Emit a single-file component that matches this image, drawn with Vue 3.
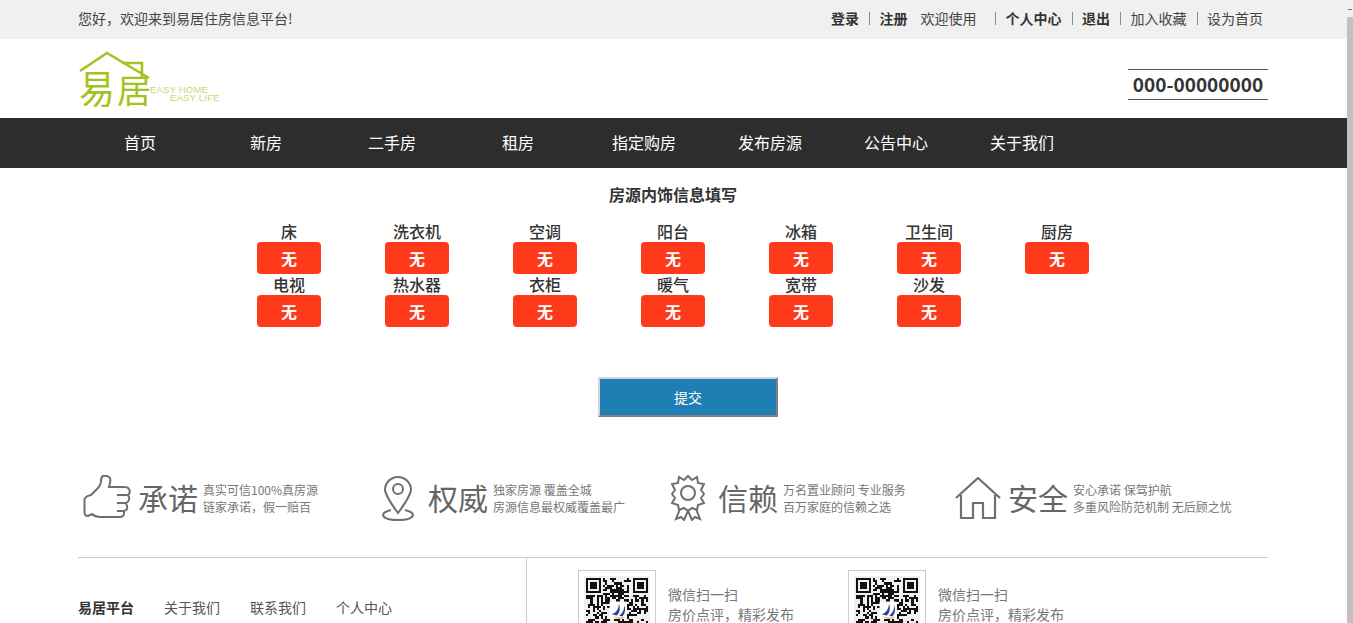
<script setup>
const topLeft = "您好，欢迎来到易居住房信息平台!";
const navItems = ["首页", "新房", "二手房", "租房", "指定购房", "发布房源", "公告中心", "关于我们"];
const amenities = ["床", "洗衣机", "空调", "阳台", "冰箱", "卫生间", "厨房", "电视", "热水器", "衣柜", "暖气", "宽带", "沙发"];
const promises = [
    { key: "thumb", title: "承诺", lines: ["真实可信100%真房源", "链家承诺，假一赔百"] },
    { key: "pin", title: "权威", lines: ["独家房源 覆盖全城", "房源信息最权威覆盖最广"] },
    { key: "medal", title: "信赖", lines: ["万名置业顾问 专业服务", "百万家庭的信赖之选"] },
    { key: "house", title: "安全", lines: ["安心承诺 保驾护航", "多重风险防范机制 无后顾之忧"] }
];
const footerLinks = ["关于我们", "联系我们", "个人中心"];

// fake qr modules, same seed every time so both codes look identical
const qrSize = 29;
const qrCells = [];
function inFinder(x, y) {
    return (x < 8 && y < 8) || (x >= qrSize - 8 && y < 8) || (x < 8 && y >= qrSize - 8);
}
let seed = 7;
for (let y = 0; y < qrSize; y++) {
    for (let x = 0; x < qrSize; x++) {
        seed = (seed * 1103515245 + 12345) % 2147483648;
        const inLogo = x > 10 && x < 19 && y > 10 && y < 19;
        if (!inFinder(x, y) && !inLogo && (seed >> 16) % 100 < 52) {
            qrCells.push({ x, y });
        }
    }
}
const finders = [[0, 0], [qrSize - 7, 0], [0, qrSize - 7]];
</script>

<template>
    <div class="screen">
        <div class="page">
            <div class="topbar">
                <div class="wrap topbar-inner">
                    <span>{{ topLeft }}</span>
                    <div class="top-links">
                        <b>登录</b><i class="sep"></i><b>注册</b>
                        <span class="welcome">欢迎使用</span>
                        <i class="sep wide"></i><b>个人中心</b><i class="sep"></i><b>退出</b><i class="sep"></i>
                        <span>加入收藏</span><i class="sep"></i><span>设为首页</span>
                    </div>
                </div>
            </div>

            <header class="wrap header">
                <svg class="logo" width="142" height="72" viewBox="0 -6 142 72">
                    <text class="logo-cn" transform="translate(1 53) scale(1 1.08)">易</text>
                    <text class="logo-cn" transform="translate(39 53) scale(0.95 0.92)">居</text>
                    <path d="M2 21 L29 3 L71 28 M44 13 L64 13 L64 27" fill="none" stroke="#a3c31f" stroke-width="2.6" />
                    <text class="logo-en"><tspan x="72" y="43">EASY HOME</tspan><tspan x="92" y="51">EASY LIFE</tspan></text>
                </svg>
                <div class="phone">000-00000000</div>
            </header>

            <nav class="nav">
                <div class="wrap nav-inner">
                    <a v-for="item in navItems" :key="item">{{ item }}</a>
                </div>
            </nav>

            <main class="form">
                <h2>房源内饰信息填写</h2>
                <div class="amenities">
                    <div class="amenity" v-for="name in amenities" :key="name">
                        <div class="amenity-name">{{ name }}</div>
                        <button class="toggle">无</button>
                    </div>
                </div>
                <button class="submit">提交</button>
            </main>

            <section class="wrap promises">
                <div class="promise" v-for="p in promises" :key="p.key">
                    <div class="promise-icon">
                        <svg v-if="p.key == 'thumb'" width="50" height="45" viewBox="0 0 50 45" fill="none" stroke="#6f6f6f" stroke-width="2">
                            <path d="M1.5 24 L1.5 37 Q1.5 41 5 41 L9 39 Q12 42 17 42 L37 42 Q41 42 41 38 L41 36 Q45 35 44 31 L43 28 Q47 26 46 22 L45 20 Q48 17 46 14 Q45 12 41 12 L26 12 Q28 6 27 3 Q25 0 20 1 Q18 2 18 6 Q18 10 14 14 L8 20 Q3 21 1.5 24 Z" />
                            <path d="M34 20 L45 20 M34 28 L43 28 M34 36 L41 36" />
                        </svg>
                        <svg v-else-if="p.key == 'pin'" width="32" height="46" viewBox="0 0 32 46" fill="none" stroke="#6f6f6f" stroke-width="2">
                            <path d="M16 38 Q4 22 3 15 A13 13 0 1 1 29 15 Q28 22 16 38 Z" />
                            <circle cx="16" cy="14" r="5" />
                            <path d="M9 35 Q1 37 1 40 Q2 45 16 45 Q30 45 31 40 Q31 37 23 35" />
                        </svg>
                        <svg v-else-if="p.key == 'medal'" width="34" height="46" viewBox="0 0 34 46" fill="none" stroke="#6f6f6f" stroke-width="2">
                            <path d="M17 1 L21 5 L26 2 L27 8 L33 9 L30 15 L33 19 L30 23 L33 28 L27 30 L26 35 L21 33 L17 36 L13 33 L8 35 L7 30 L1 28 L4 23 L1 19 L4 15 L1 9 L7 8 L8 2 L13 5 Z" />
                            <circle cx="17" cy="18" r="7" />
                            <path d="M9 34 L5 44 L10 42 L13 45 L17 36 L21 45 L24 42 L29 44 L25 34" />
                        </svg>
                        <svg v-else width="46" height="42" viewBox="0 0 46 42" fill="none" stroke="#6f6f6f" stroke-width="2.2">
                            <path d="M1 21 L23 1 L45 21" />
                            <path d="M6 18 L6 41 L18 41 L18 26 L28 26 L28 41 L40 41 L40 18" />
                        </svg>
                    </div>
                    <div class="promise-title">{{ p.title }}</div>
                    <div class="promise-desc">
                        <p v-for="line in p.lines" :key="line">{{ line }}</p>
                    </div>
                </div>
            </section>

            <footer class="wrap footer">
                <div class="footer-links">
                    <b>易居平台</b>
                    <a v-for="link in footerLinks" :key="link">{{ link }}</a>
                </div>
                <div class="footer-codes">
                    <div class="code" v-for="n in 2" :key="n">
                        <div class="qr">
                            <svg width="66" height="66" :viewBox="`-1 -1 ${qrSize + 2} ${qrSize + 2}`" shape-rendering="crispEdges">
                                <rect x="-1" y="-1" :width="qrSize + 2" :height="qrSize + 2" fill="#f0f0f0" />
                                <rect v-for="(c, i) in qrCells" :key="i" :x="c.x" :y="c.y" width="1" height="1" fill="#111" />
                                <g v-for="(f, i) in finders" :key="'f' + i">
                                    <rect :x="f[0]" :y="f[1]" width="7" height="7" fill="#111" />
                                    <rect :x="f[0] + 1" :y="f[1] + 1" width="5" height="5" fill="#f0f0f0" />
                                    <rect :x="f[0] + 2" :y="f[1] + 2" width="3" height="3" fill="#111" />
                                </g>
                                <g shape-rendering="auto">
                                    <rect x="11" y="11" width="8" height="8" fill="#fff" />
                                    <path d="M12 17 Q15 16 15.5 12 Q16.5 15.5 14.5 17.5 Z M15.5 17.5 Q18 16 18 12.5 Q19 16 17 18 Z" fill="#2b3f9e" />
                                    <path d="M12 17.5 Q15 19.5 18.5 18 Q15.5 20.5 12 17.5 Z" fill="#e08a2a" />
                                </g>
                            </svg>
                        </div>
                        <div class="code-text">
                            <p>微信扫一扫</p>
                            <p>房价点评，精彩发布</p>
                        </div>
                    </div>
                </div>
            </footer>
        </div>

        <div class="scrollbar"><div class="scroll-arrow"></div><div class="scroll-thumb"></div></div>
    </div>
</template>

<style>
    html, body {
        margin: 0;
        overflow: hidden;
        background: #fff;
    }
</style>

<style scoped>
    .screen {
        position: relative;
        width: 1353px;
        height: 623px;
        overflow: hidden;
        font-family: "Noto Sans CJK SC", "Liberation Sans", sans-serif;
        font-size: 14px;
        color: #444;
    }

    .page {
        width: 1347px;
    }

    .wrap {
        width: 1190px;
        margin-left: 78px;
        box-sizing: border-box;
    }

    .topbar {
        height: 39px;
        background: #f0f0f0;
        line-height: 36px;
    }

    .topbar-inner {
        display: flex;
        justify-content: space-between;
        padding-right: 5px;
    }

    .top-links {
        display: flex;
        align-items: center;
    }

    .top-links b {
        color: #333;
    }

    .welcome {
        margin-left: 13px;
    }

    .sep {
        width: 1px;
        height: 13px;
        background: #8a8a8a;
        margin: 1px 9.5px 0 10px;
    }

    .sep.wide {
        margin: 1px 10px 0 18px;
    }

    .header {
        height: 79px;
        display: flex;
        justify-content: space-between;
        align-items: flex-start;
    }

    .logo {
        margin-top: 5px;
    }

    .logo-cn {
        font-family: "Noto Sans CJK SC", sans-serif;
        font-size: 36px;
        fill: #a3c31f;
    }

    .logo-en {
        font-family: "Liberation Sans", sans-serif;
        font-size: 9.5px;
        letter-spacing: 0.2px;
        fill: #c6d971;
    }

    .phone {
        width: 140px;
        margin-top: 30px;
        height: 29px;
        border-top: 1px solid #555;
        border-bottom: 1px solid #555;
        font-size: 19px;
        font-weight: 700;
        line-height: 27px;
        text-align: center;
        color: #333;
    }

    .nav {
        height: 50px;
        background: #2d2d2d;
    }

    .nav-inner {
        display: flex;
        margin-left: 77px;
    }

    .nav-inner a {
        width: 126px;
        text-align: center;
        line-height: 48px;
        font-size: 16px;
        color: #fff;
    }

    .form {
        width: 1346px;
        display: flex;
        flex-direction: column;
        align-items: center;
        height: 302px;
    }

    h2 {
        margin: 15px 0 0;
        font-size: 16px;
        line-height: 23px;
        font-weight: 700;
        color: #333;
    }

    .amenities {
        width: 896px;
        margin-top: 15px;
        display: grid;
        grid-template-columns: repeat(7, 128px);
    }

    .amenity {
        height: 53px;
        display: flex;
        flex-direction: column;
        align-items: center;
    }

    .amenity-name {
        height: 21px;
        line-height: 21px;
        font-size: 16px;
        font-weight: 500;
        color: #333;
    }

    .toggle {
        width: 64px;
        height: 32px;
        padding: 0;
        border: none;
        border-radius: 4px;
        background: #ff3a1a;
        color: #fff;
        font-family: inherit;
        font-size: 16px;
        font-weight: 700;
    }

    .submit {
        width: 180px;
        height: 40px;
        margin-top: 50px;
        margin-left: 30px;
        padding: 0;
        border: 2px solid;
        border-color: #d4d4d4 #808080 #808080 #d4d4d4;
        background: #1f7fb5;
        color: #fff;
        font-family: inherit;
        font-size: 14px;
    }

    .promises {
        height: 88px;
        display: grid;
        grid-template-columns: repeat(4, 290px);
        border-bottom: 1px solid #ccc;
    }

    .promise {
        display: flex;
        height: 55px;
    }

    .promise-icon {
        width: 60px;
        height: 55px;
        display: flex;
        justify-content: center;
        align-items: center;
        flex-shrink: 0;
    }

    .promise-title {
        width: 60px;
        margin-right: 5px;
        font-size: 30px;
        line-height: 54px;
        color: #666;
        flex-shrink: 0;
    }

    .promise-desc {
        padding-top: 11px;
        font-size: 12px;
        line-height: 17px;
        color: #777;
        white-space: nowrap;
    }

    p {
        margin: 0;
    }

    .footer {
        display: flex;
        height: 200px;
    }

    .footer-links {
        width: 448px;
        height: 200px;
        box-sizing: content-box;
        border-right: 1px solid #ccc;
        padding-top: 39px;
        line-height: 20px;
        display: flex;
        align-items: flex-start;
    }

    .footer-links b {
        color: #333;
        margin-right: 30px;
    }

    .footer-links a {
        margin-right: 30px;
        color: #555;
    }

    .footer-codes {
        display: flex;
        padding: 12px 0 0 51px;
    }

    .code {
        width: 270px;
        display: flex;
        align-items: flex-start;
    }

    .qr {
        width: 78px;
        height: 78px;
        box-sizing: border-box;
        border: 1px solid #ccc;
        display: flex;
        justify-content: center;
        align-items: center;
        flex-shrink: 0;
    }

    .code-text {
        margin: 14px 0 0 12px;
        line-height: 20px;
        color: #777;
    }

    .scrollbar {
        position: absolute;
        top: 0;
        right: 0;
        width: 6px;
        height: 623px;
        background: #f1f1f1;
    }

    .scroll-arrow {
        position: absolute;
        top: 9px;
        left: 1px;
        width: 4px;
        height: 1px;
        background: #777;
    }

    .scroll-thumb {
        position: absolute;
        top: 17px;
        left: 0;
        width: 6px;
        height: 606px;
        background: #c1c1c1;
    }
</style>
